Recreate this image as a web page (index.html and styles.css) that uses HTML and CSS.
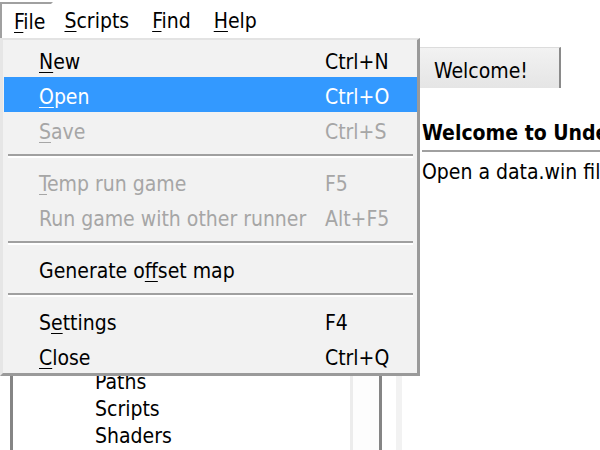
FILE: index.html
```html
<!DOCTYPE html>
<html>
<head>
<meta charset="utf-8">
<link rel="stylesheet" href="styles.css">
</head>
<body>
<div class="menubar">
  <div class="mb-item pressed"><u>F</u>ile</div>
  <div class="mb-item"><u>S</u>cripts</div>
  <div class="mb-item"><u>F</u>ind</div>
  <div class="mb-item"><u>H</u>elp</div>
</div>
<div class="main">
  <div class="tree">
    <div class="tree-list">
      <div class="node">Paths</div>
      <div class="node">Scripts</div>
      <div class="node">Shaders</div>
    </div>
    <div class="scrollbar"></div>
  </div>
  <div class="splitter"></div>
  <div class="right">
    <div class="tabs">
      <div class="tab">Welcome!</div>
    </div>
    <div class="tab-content">
      <div class="title">Welcome to UndertaleModTool!</div>
      <div class="rule"></div>
      <div class="para">Open a data.win file to get started.</div>
    </div>
  </div>
</div>
<div class="dropdown">
  <div class="mi"><span class="lbl"><u>N</u>ew</span><span class="key">Ctrl+N</span></div>
  <div class="mi active"><span class="lbl"><u>O</u>pen</span><span class="key">Ctrl+O</span></div>
  <div class="mi disabled"><span class="lbl"><u>S</u>ave</span><span class="key">Ctrl+S</span></div>
  <div class="sep"></div>
  <div class="mi disabled"><span class="lbl"><u>T</u>emp run game</span><span class="key">F5</span></div>
  <div class="mi disabled"><span class="lbl">Run game with other runner</span><span class="key">Alt+F5</span></div>
  <div class="sep"></div>
  <div class="mi"><span class="lbl">Generate o<u>f</u>fset map</span><span class="key"></span></div>
  <div class="sep"></div>
  <div class="mi"><span class="lbl">S<u>e</u>ttings</span><span class="key">F4</span></div>
  <div class="mi"><span class="lbl"><u>C</u>lose</span><span class="key">Ctrl+Q</span></div>
</div>
</body>
</html>
```
FILE: styles.css
```css
html, body {
  margin: 0;
  padding: 0;
}
body {
  width: 600px;
  height: 450px;
  overflow: hidden;
  position: relative;
  background: #ffffff;
  font-family: "DejaVu Sans Condensed", "DejaVu Sans", sans-serif;
  font-stretch: condensed;
  font-size: 21px;
  color: #000;
}
u {
  text-decoration-thickness: 1px;
  text-underline-offset: 3px;
}

/* menu bar */
.menubar {
  display: flex;
  height: 38px;
  padding-top: 2px;
  box-sizing: border-box;
}
.mb-item {
  height: 36px;
  line-height: 38px;
  padding: 0 12px 0 11px;
  white-space: nowrap;
}
.mb-item.pressed {
  border-top: 2px solid #a0a0a0;
  border-left: 2px solid #a0a0a0;
  border-right: 2px solid #ffffff;
  padding: 0 6px 0 12px;
  height: 34px;
  line-height: 36px;
}

/* main area */
.main {
  display: flex;
  height: 412px;
  padding-top: 9px;
  box-sizing: border-box;
}
.tree {
  margin-left: 10px;
  width: 372px;
  box-sizing: border-box;
  border-left: 3px solid #858585;
  border-right: 3px solid #858585;
  display: flex;
  overflow: hidden;
}
.tree-list {
  flex: 1;
  padding-top: 322px;
  white-space: nowrap;
  overflow: hidden;
}
.node {
  height: 26.5px;
  line-height: 26.5px;
  padding-left: 82px;
}
.node + .node + .node {
  padding-top: 1px;
}
.scrollbar {
  width: 26px;
  border-left: 3px solid #ececec;
  background: #fdfdfd;
}
.splitter {
  width: 14px;
}
.right {
  flex: 1;
  border-left: 6px solid #f2f2f2;
  overflow: hidden;
  min-width: 0;
}
.tabs {
  display: flex;
  height: 41px;
}
.tab {
  box-sizing: border-box;
  height: 41px;
  padding: 0 31px 0 32px;
  line-height: 46px;
  border-top: 1px solid #dcdcdc;
  border-right: 2px solid #8a8a8a;
  background: linear-gradient(#f2f2f2, #e5e5e5);
  white-space: nowrap;
}
.tab-content {
  padding: 31px 0 0 20px;
  white-space: nowrap;
  overflow: hidden;
}
.title {
  font-weight: bold;
  line-height: 28px;
}
.rule {
  height: 2px;
  background: #a0a0a0;
  margin-top: 3px;
}
.para {
  margin-top: 6px;
  line-height: 28px;
}

/* dropdown menu */
.dropdown {
  position: absolute;
  left: 0;
  top: 38px;
  width: 420px;
  box-sizing: border-box;
  padding: 2px 0 0 0;
  background: #f2f2f2;
  border-top: 2px solid #e3e3e3;
  border-left: 3px solid #e6e6e6;
  border-right: 3px solid #9a9a9a;
  border-bottom: 3px solid #9a9a9a;
  white-space: nowrap;
}
.mi {
  display: flex;
  height: 35px;
  line-height: 40px;
  padding-left: 35px;
  margin-left: 1px;
}
.mi .lbl {
  flex: 0 0 286px;
}
.mi.active {
  background: #3399ff;
  color: #ffffff;
}
.mi.disabled {
  color: #a6a6a6;
}
.sep {
  margin: 7px 4px 6px 5px;
  border-top: 2px solid #a0a0a0;
  border-bottom: 2px solid #ffffff;
}
```
